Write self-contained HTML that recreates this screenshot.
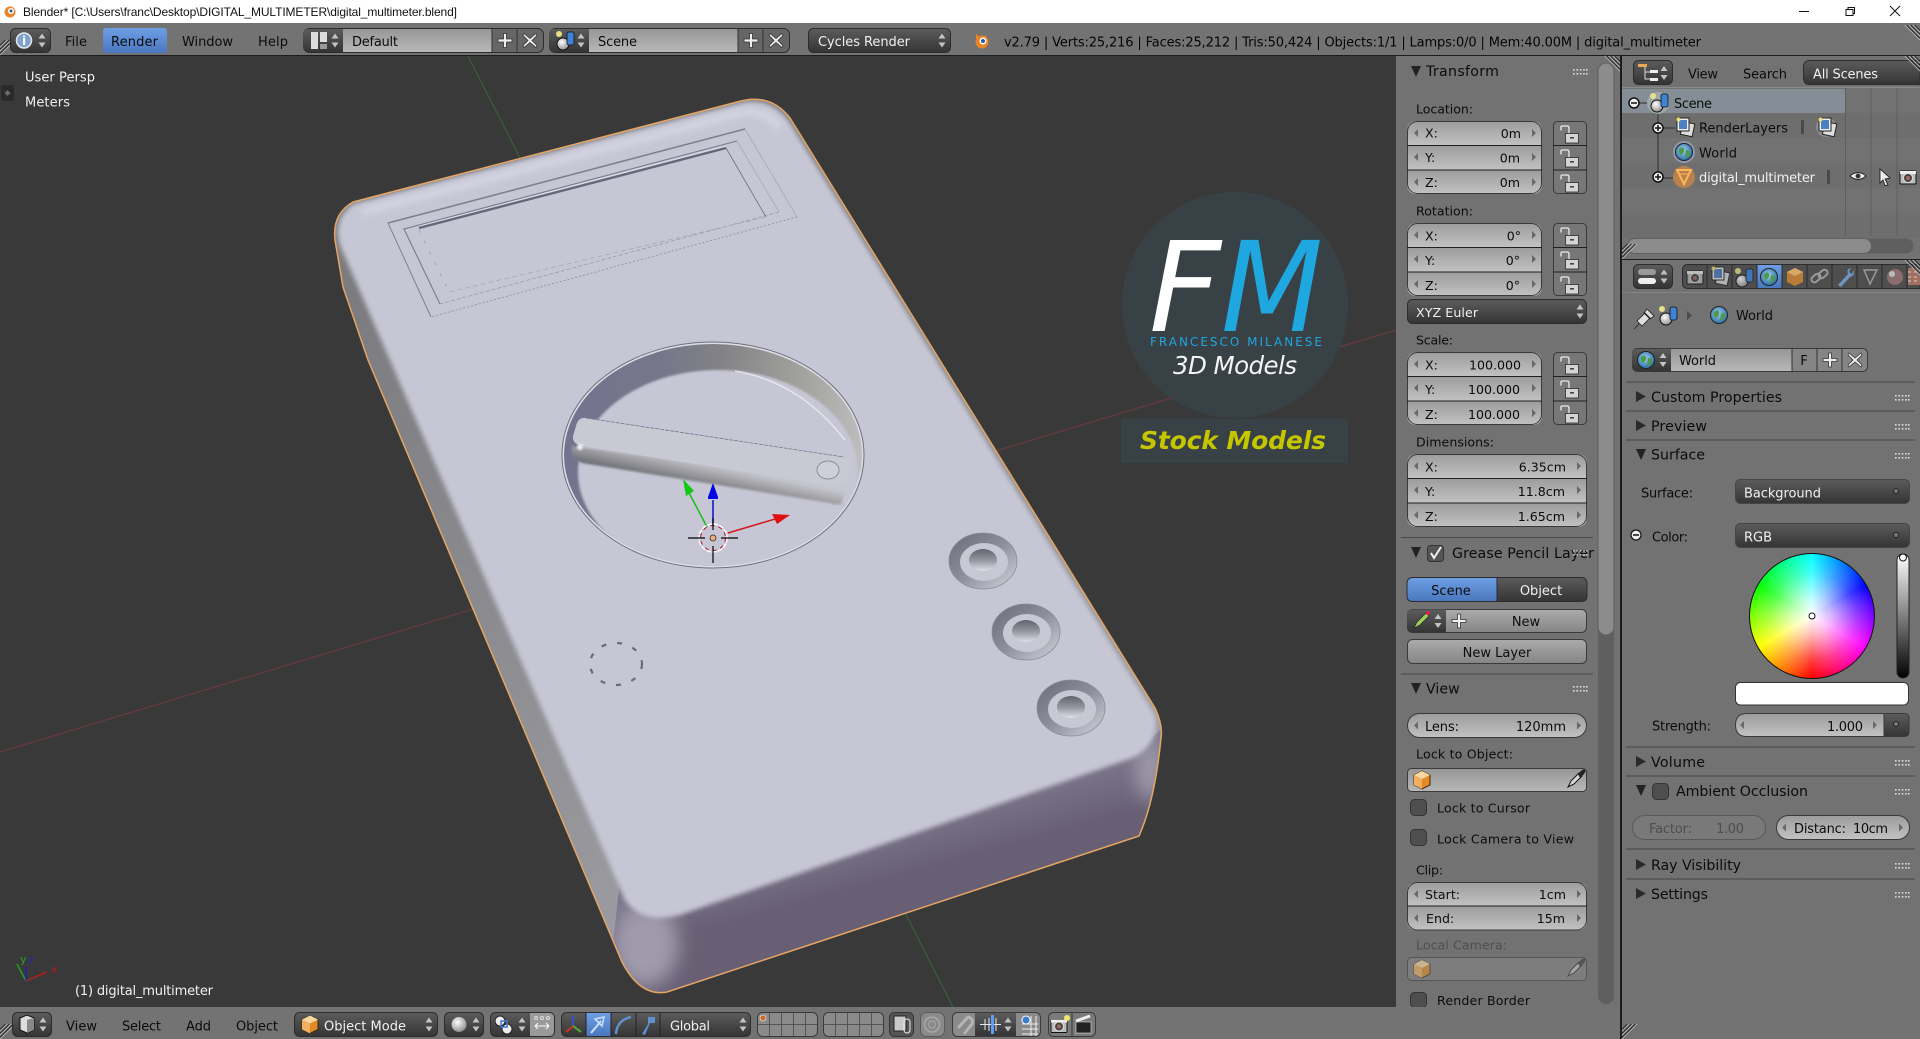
<!DOCTYPE html>
<html><head><meta charset="utf-8"><title>Blender</title>
<style>
html,body{margin:0;padding:0;background:#393939;overflow:hidden}
svg{display:block;position:absolute;left:0;top:0}
text{font-family:"DejaVu Sans",sans-serif;font-size:12.6px;fill:#0c0c0c}
.w{fill:#f0f0f0}.g{fill:#4e4e4e}.h{font-size:14.2px}.m{font-size:13px}
.e{text-anchor:end}.c{text-anchor:middle}
</style></head><body>
<svg width="1920" height="1039" viewBox="0 0 1920 1039" xmlns="http://www.w3.org/2000/svg">
<defs>
<linearGradient id="num" x1="0" y1="0" x2="0" y2="1"><stop offset="0" stop-color="#9c9c9c"/><stop offset="1" stop-color="#c2c2c2"/></linearGradient>
<linearGradient id="btn" x1="0" y1="0" x2="0" y2="1"><stop offset="0" stop-color="#ababab"/><stop offset="1" stop-color="#858585"/></linearGradient>
<linearGradient id="txt" x1="0" y1="0" x2="0" y2="1"><stop offset="0" stop-color="#969696"/><stop offset="1" stop-color="#b8b8b8"/></linearGradient>
<linearGradient id="drk" x1="0" y1="0" x2="0" y2="1"><stop offset="0" stop-color="#5c5c5c"/><stop offset="1" stop-color="#343434"/></linearGradient>
<linearGradient id="blu" x1="0" y1="0" x2="0" y2="1"><stop offset="0" stop-color="#6d9fe4"/><stop offset="1" stop-color="#4a77bd"/></linearGradient>
<linearGradient id="val" x1="0" y1="0" x2="0" y2="1"><stop offset="0" stop-color="#fff"/><stop offset="1" stop-color="#000"/></linearGradient>
<linearGradient id="side" gradientUnits="userSpaceOnUse" x1="880" y1="785" x2="905" y2="875"><stop offset="0" stop-color="#8a869c"/><stop offset="1" stop-color="#685f74"/></linearGradient>
<linearGradient id="lside" gradientUnits="userSpaceOnUse" x1="350" y1="300" x2="660" y2="960"><stop offset="0" stop-color="#7c7c80"/><stop offset="1" stop-color="#9c9ca2"/></linearGradient>
<linearGradient id="cres" gradientUnits="userSpaceOnUse" x1="565" y1="420" x2="865" y2="440"><stop offset="0" stop-color="#73738f"/><stop offset=".3" stop-color="#76768a"/><stop offset=".5" stop-color="#828286"/><stop offset=".78" stop-color="#a2a29e"/><stop offset="1" stop-color="#bebec0"/></linearGradient>
<linearGradient id="barside" gradientUnits="userSpaceOnUse" x1="703" y1="462" x2="697" y2="490"><stop offset="0" stop-color="#c6c6d0"/><stop offset=".35" stop-color="#a6a6aa"/><stop offset="1" stop-color="#62626c"/></linearGradient>
<linearGradient id="ringg" x1="0" y1="0" x2="1" y2="1"><stop offset="0" stop-color="#6a6a76"/><stop offset=".5" stop-color="#8f8f9c"/><stop offset="1" stop-color="#d4d4de"/></linearGradient>
<linearGradient id="holeg" x1="0" y1="0" x2="0" y2="1"><stop offset="0" stop-color="#62626c"/><stop offset=".55" stop-color="#9a9aa6"/><stop offset="1" stop-color="#e0e0e8"/></linearGradient>
<radialGradient id="sph" cx=".4" cy=".35" r=".7"><stop offset="0" stop-color="#fff"/><stop offset="1" stop-color="#8a8a8a"/></radialGradient>
<radialGradient id="glb" cx=".45" cy=".4" r=".6"><stop offset="0" stop-color="#9fd0f0"/><stop offset="1" stop-color="#2a6fa8"/></radialGradient>
<filter id="b3" x="-30%" y="-30%" width="160%" height="160%"><feGaussianBlur stdDeviation="3.5"/></filter>
<filter id="b8" x="-50%" y="-50%" width="200%" height="200%"><feGaussianBlur stdDeviation="9"/></filter>
<filter id="b2" x="-10%" y="-10%" width="120%" height="120%"><feGaussianBlur stdDeviation="2.4"/></filter>
<filter id="b1" x="-10%" y="-20%" width="120%" height="140%"><feGaussianBlur stdDeviation="1"/></filter>
<clipPath id="bodyclip"><path d="M353 202L737 102Q770 92 790 118L1155 708Q1163 725 1161 738Q1155 800 1139 836L667 992Q640 997 622 962L368 360L343 287L335 240Q332 214 353 202Z"/></clipPath>
<clipPath id="floor"><ellipse cx="713" cy="455" rx="149" ry="111"/></clipPath>

<g id="la"><path d="M0-4v8l-4-4z" fill="#686868"/></g>
<g id="ra"><path d="M0-4v8l4-4z" fill="#686868"/></g>
<g id="updn"><path d="M0-7l3.500 5h-7zM0 7l3.500-5h-7z" fill="#c4c4c4"/></g>

<g id="tri135"><path d="M0 24.500V10Q0 0 10 0H125Q135 0 135 10V24.500Z" fill="url(#num)"/><rect y="24.500" width="135" height="24.500" fill="url(#num)"/><path d="M0 49H135V63Q135 73 125 73H10Q0 73 0 63Z" fill="url(#num)"/><rect x=".5" y=".5" width="134" height="72" rx="10" fill="none" stroke="#3a3a3a"/><path d="M0 24.500H135M0 49H135" stroke="#1f1f1f"/>
<use href="#la" x="11" y="12"/><use href="#la" x="11" y="36"/><use href="#la" x="11" y="61"/><use href="#ra" x="125" y="12"/><use href="#ra" x="125" y="36"/><use href="#ra" x="125" y="61"/></g>
<g id="tri180"><path d="M0 24.500V10Q0 0 10 0H170Q180 0 180 10V24.500Z" fill="url(#num)"/><rect y="24.500" width="180" height="24.500" fill="url(#num)"/><path d="M0 49H180V63Q180 73 170 73H10Q0 73 0 63Z" fill="url(#num)"/><rect x=".5" y=".5" width="179" height="72" rx="10" fill="none" stroke="#3a3a3a"/><path d="M0 24.500H180M0 49H180" stroke="#1f1f1f"/>
<use href="#la" x="11" y="12"/><use href="#la" x="11" y="36"/><use href="#la" x="11" y="61"/><use href="#ra" x="170" y="12"/><use href="#ra" x="170" y="36"/><use href="#ra" x="170" y="61"/></g>

<g id="lk"><path d="M8 8.500V5Q8 4 9.500 4H14Q16 4 16 6V11.500" fill="none" stroke="#ececec" stroke-width="1.300"/><rect x="12.500" y="11.500" width="13" height="9.500" fill="#d4d4d4" stroke="#2a2a2a" stroke-width=".8"/><rect x="17" y="15" width="4" height="1.600" fill="#444"/></g>
<g id="locks"><rect x=".5" y=".5" width="33" height="72" rx="4" fill="#777" stroke="#3a3a3a"/><path d="M0 24.500H34M0 49H34" stroke="#1f1f1f"/><use href="#lk" x="0" y="1"/><use href="#lk" x="0" y="25"/><use href="#lk" x="0" y="50"/></g>

<g id="grip" fill="#dcdcdc"><rect x="0" y="0" width="1.600" height="1.600"/><rect x="3.400" y="0" width="1.600" height="1.600"/><rect x="6.800" y="0" width="1.600" height="1.600"/><rect x="10.200" y="0" width="1.600" height="1.600"/><rect x="13" y="0" width="1.600" height="1.600"/><rect x="0" y="4" width="1.600" height="1.600"/><rect x="3.400" y="4" width="1.600" height="1.600"/><rect x="6.800" y="4" width="1.600" height="1.600"/><rect x="10.200" y="4" width="1.600" height="1.600"/><rect x="13" y="4" width="1.600" height="1.600"/></g>
<path id="td" d="M0 0h10l-5 11z" fill="#222"/>
<path id="tr" d="M0 0l10 5.500-10 5.500z" fill="#2a2a2a"/>

<g id="hatch" stroke-width="1"><path d="M0 0L15 15M4 0L15 11M8 0L15 7" stroke="#b4b4b4"/><path d="M1.500 0L15 13.500M5.500 0L15 9.500M9.500 0L15 5.500" stroke="#252525"/></g>

<g id="scene"><circle cx="-3" cy="3" r="6" fill="url(#sph)" stroke="#111"/><rect x="1" y="-9" width="7" height="13" rx="2" fill="#3f83d6" stroke="#111" stroke-width=".8"/><circle cx="-7" cy="-7" r="3" fill="#e6e08c"/></g>
<g id="world"><circle r="8.500" fill="url(#glb)" stroke="#222"/><path d="M-5-3Q-1-6 0-3T-3 3Q-6 1-5-3ZM2-2L6-1 5 4 1 6Z" fill="#4f9a4a"/></g>
<g id="rl"><rect x="-3" y="-5" width="12" height="13" fill="#ddd" stroke="#222" transform="rotate(12)"/><rect x="-8" y="-9" width="12" height="13" fill="#eee" stroke="#222"/><rect x="-6" y="-7" width="8" height="9" fill="#4d7fc4"/><circle cx="-6.500" cy="-7.500" r="2" fill="#e8e070"/></g>
<g id="cube"><path d="M0-9L8-5V5L0 9-8 5V-5Z" fill="#e28a28" stroke="#3a2a10"/><path d="M0-9L8-5 0-1-8-5Z" fill="#f8d8a0"/><path d="M0-1V9L-8 5V-5Z" fill="#f0b060"/></g>
<g id="drop"><path d="M-8 8L-5 2 3-6 6-3-2 5Z" fill="#d8d8d8" stroke="#111"/><path d="M2-5L6-9Q8-10 9-9T8-5L4-1Z" fill="#222"/></g>

<g id="plus"><path d="M-7-1.500H-1.500V-7H1.500V-1.500H7V1.500H1.500V7H-1.500V1.500H-7Z" fill="#eee" stroke="#333" stroke-width=".8"/></g>
<g id="xx"><path d="M-6-7L0-2 6-7 7-5 2 0 7 5 6 7 0 2-6 7-7 5-2 0-7-5Z" fill="#eee" stroke="#333" stroke-width=".8"/></g>
<g id="cam"><rect x="-8" y="-6" width="16" height="13" rx="1" fill="#bcbcbc" stroke="#111"/><rect x="-8" y="-6" width="16" height="3" fill="#eee"/><circle cy="1" r="4.500" fill="#444" stroke="#ddd"/><circle cy="1" r="2" fill="#a66"/></g>
</defs>

<!-- base -->
<rect width="1920" height="1039" fill="#393939"/>
<!-- grid lines -->
<path d="M468 56L953 1007" stroke="#3d653d" stroke-width="1"/>
<path d="M0 752L1396 330" stroke="#6a3a3f" stroke-width="1.200"/>

<!-- device -->
<path d="M353 202L737 102Q770 92 790 118L1155 708Q1163 725 1161 738Q1155 800 1139 836L667 992Q640 997 622 962L368 360L343 287L335 240Q332 214 353 202Z" fill="url(#lside)"/>
<g clip-path="url(#bodyclip)">
<path d="M620 880L680 905 1140 750 1175 715 1175 850 660 1005 610 970Z" fill="url(#side)"/>
<ellipse cx="645" cy="945" rx="34" ry="42" fill="#9f9aac" filter="url(#b8)"/>
<ellipse cx="1150" cy="770" rx="14" ry="30" fill="#9d9aaa" filter="url(#b8)"/>
<path d="M353 204L737 104Q768 95 788 120L1155 715Q1160 742 1135 757L680 915Q642 925 625 900L342 250Q330 222 353 204Z" fill="#c6c6d4" filter="url(#b2)"/>
<path d="M362 212L737 114Q762 106 780 128" fill="none" stroke="#d5d5e4" stroke-width="7" filter="url(#b3)"/>
</g>
<path d="M353 202L737 102Q770 92 790 118L1155 708Q1163 725 1161 738Q1155 800 1139 836L667 992Q640 997 622 962L368 360L343 287L335 240Q332 214 353 202Z" fill="none" stroke="#e5a564" stroke-width="1.500"/>

<!-- lcd -->
<g fill="none">
<path d="M431 317L388 223L745 129" stroke="#80808f" stroke-width="1"/>
<path d="M388 223L745 129" stroke="#80808f" stroke-width="1.600"/>
<path d="M745 129L797 217" stroke="#a8a8b4" stroke-width=".8"/>
<path d="M797 217L431 317" stroke="#8d8d9a" stroke-width=".8" stroke-dasharray="2 2"/>
<path d="M440 304L404 229L737 141" stroke="#7a7a8a" stroke-width="1.100"/>
<path d="M737 141L779 212" stroke="#a8a8b4" stroke-width=".8"/>
<path d="M779 212L440 304" stroke="#9b9ba8" stroke-width=".8" stroke-dasharray="4 2"/>
<path d="M419 228L726 148" stroke="#66667c" stroke-width="2.400"/>
<path d="M419 226L726 146" stroke="#f0f0f6" stroke-width=".8" opacity=".7"/>
<path d="M726 148L766 217" stroke="#6e6e7c" stroke-width=".8"/>
<path d="M419 230L449 292" stroke="#9b9ba8" stroke-width=".8" stroke-dasharray="3 9"/>
<path d="M766 217L449 292" stroke="#a8a8b4" stroke-width=".8" stroke-dasharray="5 3"/>
</g>

<!-- dial -->
<ellipse cx="713" cy="455" rx="151" ry="113" fill="#dcdce4" stroke="#6f6f7d" stroke-width="1"/>
<g clip-path="url(#floor)">
<ellipse cx="713" cy="455" rx="149" ry="111" fill="url(#cres)"/>
<ellipse cx="718" cy="472" rx="140" ry="102" fill="#c6c6d4" filter="url(#b1)"/>
</g>
<path d="M735 371Q800 382 845 440" fill="none" stroke="#ececf0" stroke-width="1.500" opacity=".8"/>
<!-- bar -->
<path d="M572 446L846 484 842 503Q838 506 830 503L582 463Q570 458 572 446Z" fill="url(#barside)" filter="url(#b1)"/>
<path d="M586 418L844 457Q852 460 850 472L847 482Q843 488 834 486L582 446Q572 444 573 436L576 426Q578 417 586 418Z" fill="#c9c9d4"/>
<circle cx="580" cy="447" r="3" fill="#f4f4f4" filter="url(#b1)"/>
<ellipse cx="828" cy="470" rx="11" ry="9" fill="#cfcfd9" stroke="#8c8c98"/>
<path d="M586 418L844 457" stroke="#77778a" stroke-width=".8" stroke-dasharray="4 1"/>

<!-- buttons -->
<g>
<g id="pb"><ellipse cx="983" cy="561" rx="34" ry="28" fill="url(#ringg)"/><ellipse cx="983" cy="561" rx="34" ry="28" fill="none" stroke="#8c8c98" stroke-width=".8"/><ellipse cx="984" cy="562" rx="24" ry="19" fill="#c8c8d4"/><ellipse cx="983" cy="560" rx="14" ry="11" fill="url(#holeg)"/></g>
<use href="#pb" x="43" y="71"/><use href="#pb" x="88" y="147"/>
</g>
<!-- speaker -->
<ellipse cx="616" cy="664" rx="26" ry="21" fill="none" stroke="#6a6a78" stroke-width="2.200" stroke-dasharray="5 11"/>

<!-- gizmo -->
<path d="M707 527L686 487" stroke="#17c017" stroke-width="1.500"/><path d="M683 479L694 491 686 496Z" fill="#14c814"/>
<path d="M713 525V500" stroke="#0a0ad8" stroke-width="1.500"/><path d="M713 483L718 497V499H708V497Z" fill="#0505e0"/>
<path d="M728 533L775 519" stroke="#d01a1a" stroke-width="1.500"/><path d="M790 515L772 514 777 524Z" fill="#e01010"/>
<circle cx="713" cy="538" r="14" fill="none" stroke="#fff" stroke-width="1.500" stroke-dasharray="5 1"/>
<circle cx="713" cy="538" r="12.500" fill="none" stroke="#c01030" stroke-width="1" stroke-dasharray="4 4"/>
<path d="M688 538H705M721 538H738M713 518V530M713 546V563" stroke="#000" stroke-width="1.200"/>
<circle cx="713" cy="538" r="3" fill="#e8b078" stroke="#222" stroke-width=".7"/>

<!-- logo -->
<g>
<circle cx="1235" cy="305" r="113" fill="#384145"/>
<rect x="1121" y="419" width="227" height="44" fill="#384145"/>
<text x="1149" y="331" style="font-size:125px;font-style:italic;fill:#fff" textLength="72" lengthAdjust="spacingAndGlyphs">F</text>
<text x="1221" y="331" style="font-size:125px;font-style:italic;fill:#1fa8e0" textLength="102" lengthAdjust="spacingAndGlyphs">M</text>
<text x="1150" y="346" style="font-size:12px;fill:#21a5dc" textLength="172">FRANCESCO MILANESE</text>
<text x="1173" y="374" style="font-size:24.500px;font-style:italic;fill:#f4f4f4" textLength="124">3D Models</text>
<text x="1140" y="449" style="font-size:25px;font-style:italic;font-weight:bold;fill:#c6c600" textLength="186">Stock Models</text>
</g>

<!-- viewport overlay text -->
<text class="w m" x="25" y="81.500" textLength="70">User Persp</text>
<text class="w m" x="25" y="106.500" textLength="45">Meters</text>
<rect x="1" y="85" width="13" height="16" rx="3" fill="#2a2a2a"/><path d="M7.500 90l3 3-3 3-3-3z" fill="#6a6a6a"/>
<path d="M26 981L47 972" stroke="#b02020" stroke-width="1.500"/><path d="M26 981L17 964" stroke="#20a020" stroke-width="1.500"/><path d="M26 981V966" stroke="#2020b0" stroke-width="1.500"/>
<text x="51" y="973" style="fill:#b02020;font-size:11px">x</text><text x="20" y="963" style="fill:#30a030;font-size:11px">y</text><text x="28" y="963" style="fill:#2828b0;font-size:11px">z</text>
<text class="w m" x="75" y="995" textLength="138">(1) digital_multimeter</text>

<!-- title bar -->
<rect width="1920" height="23" fill="#fff"/>
<circle cx="10" cy="12" r="5.500" fill="#e8842a"/><circle cx="11" cy="11" r="3" fill="#fff"/><circle cx="11" cy="11" r="1.500" fill="#2a5a9a"/>
<text x="23" y="16" style="font-family:'Liberation Sans',sans-serif;font-size:12px;fill:#111" textLength="434">Blender* [C:\Users\franc\Desktop\DIGITAL_MULTIMETER\digital_multimeter.blend]</text>
<path d="M1799 11.500H1809" stroke="#111"/>
<path d="M1846 9.500H1853V15.500H1846ZM1848 9.500V7.500H1854.500V13.500H1853" fill="none" stroke="#111"/>
<path d="M1890 6L1900 16M1900 6L1890 16" stroke="#111"/>

<!-- top header -->
<rect y="23" width="1920" height="32" fill="#737373"/>
<rect y="55" width="1920" height="1" fill="#1c1c1c"/>
<use href="#hatch" transform="translate(0,55) rotate(-90) translate(0,0) scale(1)"/>
<rect x="10.500" y="28.500" width="40" height="24" rx="5" fill="url(#drk)" stroke="#2c2c2c"/>
<circle cx="24" cy="40.500" r="7.500" fill="#7da3cf" stroke="#e8e8e8" stroke-width="1.500"/><text class="c" x="24" y="45" style="fill:#fff;font-size:12px;font-weight:bold">i</text>
<use href="#updn" x="42" y="40.500"/>
<text class="m" x="65" y="46" textLength="22">File</text>
<rect x="103" y="28" width="64" height="25" rx="3" fill="url(#blu)"/>
<text class="m" x="111" y="46" textLength="47">Render</text>
<text class="m" x="182" y="46" textLength="51">Window</text>
<text class="m" x="258" y="46" textLength="30">Help</text>

<rect x="303.500" y="28.500" width="240" height="24" rx="6" fill="#666" stroke="#2c2c2c"/>
<path d="M343 29H492V52H343Z" fill="url(#txt)"/>
<path d="M303 35Q303 29 309 29H343V52H309Q303 52 303 46Z" fill="url(#drk)"/>
<rect x="311" y="32" width="7" height="17" fill="#ddd"/><rect x="320" y="32" width="7" height="10" fill="#ddd"/><rect x="320" y="44" width="7" height="5" fill="#999"/>
<use href="#updn" x="335" y="40.500"/>
<path d="M492 29V52M517 29V52" stroke="#333"/>
<text class="m" x="352" y="46" textLength="46">Default</text>
<use href="#plus" x="505" y="40.500"/><use href="#xx" x="530" y="40.500"/>

<rect x="549.500" y="28.500" width="240" height="24" rx="6" fill="#666" stroke="#2c2c2c"/>
<path d="M589 29H738V52H589Z" fill="url(#txt)"/>
<path d="M549 35Q549 29 555 29H589V52H555Q549 52 549 46Z" fill="url(#drk)"/>
<use href="#scene" x="566" y="41"/>
<use href="#updn" x="581" y="40.500"/>
<path d="M738 29V52M763 29V52" stroke="#333"/>
<text class="m" x="598" y="46" textLength="39">Scene</text>
<use href="#plus" x="751" y="40.500"/><use href="#xx" x="776" y="40.500"/>

<rect x="808.500" y="28.500" width="142" height="24" rx="5" fill="url(#drk)" stroke="#2c2c2c"/>
<text class="w m" x="818" y="46" textLength="92">Cycles Render</text>
<use href="#updn" x="942" y="40.500"/>

<circle cx="982" cy="42" r="6.500" fill="#e8842a"/><path d="M976 34L982 38 986 35 987 42H976Z" fill="#e8842a"/><circle cx="983" cy="41" r="3.500" fill="#fff"/><circle cx="983" cy="41" r="2" fill="#2a5a9a"/>
<text class="m" x="1004" y="46.500" textLength="697" style="fill:#050505">v2.79 | Verts:25,216 | Faces:25,212 | Tris:50,424 | Objects:1/1 | Lamps:0/0 | Mem:40.00M | digital_multimeter</text>
<use href="#hatch" x="1905" y="25"/>

<!-- N panel -->
<rect x="1396" y="56" width="224" height="951" fill="#727272"/>
<rect x="1598" y="63" width="16" height="941" rx="8" fill="#5f5f5f"/>
<rect x="1598" y="63" width="16" height="572" rx="8" fill="#8c8c8c" stroke="#606060"/>
<use href="#hatch" x="1605" y="56"/>
<use href="#td" x="1411" y="66"/>
<text class="h" x="1426" y="76" textLength="73">Transform</text>
<use href="#grip" x="1573" y="69"/>
<text x="1416" y="113.500" textLength="57">Location:</text>
<use href="#tri135" x="1407" y="121"/>
<text x="1425" y="137.500">X:</text><text x="1425" y="162">Y:</text><text x="1425" y="187">Z:</text>
<text class="e" x="1521" y="138">0m</text><text class="e" x="1520" y="162.500">0m</text><text class="e" x="1520" y="187">0m</text>
<use href="#locks" x="1553" y="121"/>

<text x="1416" y="215.500" textLength="57">Rotation:</text>
<use href="#tri135" x="1407" y="223"/>
<text x="1425" y="240.500">X:</text><text x="1425" y="265">Y:</text><text x="1425" y="290">Z:</text>
<text class="e" x="1521" y="240.500">0°</text><text class="e" x="1520" y="265">0°</text><text class="e" x="1520" y="290">0°</text>
<use href="#locks" x="1553" y="223"/>

<rect x="1407.500" y="299.500" width="179" height="24" rx="5" fill="url(#drk)" stroke="#2c2c2c"/>
<text class="w" x="1416" y="317" textLength="62">XYZ Euler</text>
<use href="#updn" x="1580" y="311.500"/>

<text x="1416" y="344.500" textLength="37">Scale:</text>
<use href="#tri135" x="1407" y="352"/>
<text x="1425" y="369.500">X:</text><text x="1425" y="394">Y:</text><text x="1425" y="419">Z:</text>
<text class="e" x="1521" y="369.500" textLength="52">100.000</text><text class="e" x="1520" y="394" textLength="52">100.000</text><text class="e" x="1520" y="419" textLength="52">100.000</text>
<use href="#locks" x="1553" y="352"/>

<text x="1416" y="446.500" textLength="78">Dimensions:</text>
<use href="#tri180" x="1407" y="454"/>
<text x="1425" y="471.500">X:</text><text x="1425" y="496">Y:</text><text x="1425" y="521">Z:</text>
<text class="e" x="1566" y="471.500">6.35cm</text><text class="e" x="1565" y="496">11.8cm</text><text class="e" x="1565" y="521">1.65cm</text>

<path d="M1401 537.500H1593" stroke="#4a4a4a"/>
<use href="#td" x="1411" y="547"/>
<rect x="1427.500" y="545.500" width="16" height="16" rx="3" fill="#555" stroke="#333"/>
<path d="M1431 553L1434 558 1441 547" fill="none" stroke="#f0f0f0" stroke-width="2"/>
<text class="h" x="1452" y="558" textLength="142">Grease Pencil Layer</text>
<use href="#grip" x="1573" y="550" opacity=".8"/>

<path d="M1407 584Q1407 577.500 1413 577.500H1497V601.500H1413Q1407 601.500 1407 596Z" fill="url(#blu)" stroke="#2c2c2c"/>
<path d="M1497 577.500H1581Q1587 577.500 1587 584V596Q1587 601.500 1581 601.500H1497Z" fill="url(#drk)" stroke="#2c2c2c"/>
<text class="m c" x="1451" y="595">Scene</text>
<text class="w m c" x="1541" y="595">Object</text>

<rect x="1407.500" y="609.500" width="179" height="23" rx="5" fill="url(#btn)" stroke="#3a3a3a"/>
<path d="M1407 615Q1407 609.500 1413 609.500H1446V632.500H1413Q1407 632.500 1407 627Z" fill="url(#drk)"/>
<path d="M1414 628L1417 622 1426 613 1429 616 1420 625Z" fill="#9ccc5a" stroke="#222" stroke-width=".6"/><circle cx="1428" cy="613" r="2" fill="#d24"/>
<use href="#updn" x="1438" y="621"/>
<use href="#plus" x="1459" y="621"/>
<text class="m c" x="1526" y="626">New</text>

<rect x="1407.500" y="639.500" width="179" height="24" rx="5" fill="url(#btn)" stroke="#3a3a3a"/>
<text class="m c" x="1497" y="657">New Layer</text>

<path d="M1401 674H1593" stroke="#4a4a4a"/>
<use href="#td" x="1411" y="683"/>
<text class="h" x="1426" y="693.500">View</text>
<use href="#grip" x="1573" y="686"/>

<rect x="1407.500" y="713.500" width="179" height="24" rx="12" fill="url(#num)" stroke="#3a3a3a"/>
<use href="#la" x="1418" y="725.500"/><use href="#ra" x="1577" y="725.500"/>
<text class="m" x="1425" y="731" textLength="34">Lens:</text>
<text class="e m" x="1566" y="731">120mm</text>

<text x="1416" y="758.500" textLength="97">Lock to Object:</text>
<rect x="1407.500" y="768.500" width="179" height="23" rx="4" fill="url(#txt)" stroke="#3a3a3a"/>
<use href="#cube" x="1422" y="780"/><use href="#drop" x="1576" y="779"/>

<rect x="1410.500" y="799.500" width="16" height="16" rx="4" fill="#4e4e4e" stroke="#343434"/>
<text x="1437" y="812.500" textLength="93">Lock to Cursor</text>
<rect x="1410.500" y="829.500" width="16" height="16" rx="4" fill="#4e4e4e" stroke="#343434"/>
<text x="1437" y="843.500" textLength="137">Lock Camera to View</text>

<text x="1416" y="874.500" textLength="27">Clip:</text>
<path d="M1407 906V892Q1407 882.500 1417 882.500H1577Q1587 882.500 1587 892V906Z" fill="url(#num)"/>
<path d="M1407 906H1587V920Q1587 930 1577 930H1417Q1407 930 1407 920Z" fill="url(#num)"/>
<rect x="1407.500" y="882.500" width="179" height="47.500" rx="10" fill="none" stroke="#3a3a3a"/>
<path d="M1407 906H1587" stroke="#1f1f1f"/>
<use href="#la" x="1418" y="894"/><use href="#ra" x="1577" y="894"/><use href="#la" x="1418" y="918"/><use href="#ra" x="1577" y="918"/>
<text x="1425" y="899">Start:</text><text x="1426" y="923">End:</text>
<text class="e" x="1566" y="899">1cm</text><text class="e" x="1565" y="923">15m</text>

<text class="g" x="1416" y="949.500" textLength="91">Local Camera:</text>
<rect x="1407.500" y="957.500" width="179" height="23" rx="4" fill="#7d7d7d" stroke="#555"/>
<use href="#cube" x="1422" y="969" opacity=".6"/><use href="#drop" x="1576" y="968" opacity=".45"/>
<rect x="1410.500" y="992.500" width="16" height="15" rx="4" fill="#4e4e4e" stroke="#343434"/>
<text x="1437" y="1005" textLength="93">Render Border</text>

<!-- bottom header -->
<rect y="1007" width="1620" height="32" fill="#737373"/>
<use href="#hatch" transform="translate(0,1039) rotate(-90)"/>
<rect x="12.500" y="1012.500" width="39" height="24" rx="5" fill="url(#drk)" stroke="#2c2c2c"/>
<path d="M20 1018L27 1015 34 1018V1030L27 1033 20 1030Z" fill="#ddd" stroke="#111"/><path d="M27 1020V1033L34 1030V1018Z" fill="#888"/>
<use href="#updn" x="43" y="1024.500"/>
<text class="m" x="66" y="1030.500" textLength="31">View</text>
<text class="m" x="122" y="1030.500" textLength="39">Select</text>
<text class="m" x="186" y="1030.500" textLength="25">Add</text>
<text class="m" x="236" y="1030.500" textLength="42">Object</text>
<rect x="294.500" y="1012.500" width="143" height="24" rx="5" fill="url(#drk)" stroke="#2c2c2c"/>
<use href="#cube" x="310" y="1024.500"/>
<text class="w m" x="324" y="1030.500" textLength="82">Object Mode</text>
<use href="#updn" x="429" y="1024.500"/>
<rect x="444.500" y="1012.500" width="39" height="24" rx="5" fill="url(#drk)" stroke="#2c2c2c"/>
<circle cx="459" cy="1024.500" r="7.500" fill="url(#sph)"/><use href="#updn" x="476" y="1024.500"/>
<rect x="490.500" y="1012.500" width="64" height="24" rx="5" fill="url(#drk)" stroke="#2c2c2c"/>
<path d="M530 1013H549Q554 1013 554 1018V1031Q554 1036 549 1036H530Z" fill="#9a9a9a"/>
<circle cx="500" cy="1021" r="5" fill="#eee" stroke="#222"/><circle cx="507" cy="1029" r="5" fill="#eee" stroke="#222"/><rect x="501" y="1021" width="6" height="6" fill="none" stroke="#3a7ad0" stroke-width="1.500"/>
<use href="#updn" x="522" y="1024.500"/>
<path d="M535 1026H549M535 1026l3-3M535 1026l3 3M549 1026l-3-3M549 1026l-3 3" stroke="#fff" fill="none"/>
<g fill="none" stroke="#ddd"><circle cx="536" cy="1018" r="1.500"/><circle cx="542" cy="1018" r="1.500"/><circle cx="548" cy="1018" r="1.500"/></g>
<rect x="561.500" y="1012.500" width="189" height="24" rx="5" fill="url(#drk)" stroke="#2c2c2c"/>
<rect x="586" y="1013" width="25" height="23" fill="url(#blu)"/>
<path d="M586 1013V1036M611 1013V1036M636 1013V1036M660 1013V1036" stroke="#222"/>
<path d="M573 1026V1016" stroke="#3050d0" stroke-width="2"/><path d="M573 1026L566 1032" stroke="#d03020" stroke-width="2"/><path d="M573 1026L581 1032" stroke="#50b030" stroke-width="2"/>
<path d="M591 1033L601 1021" stroke="#cfe0f8" stroke-width="2"/><path d="M604 1017L595 1019 602 1026Z" fill="none" stroke="#cfe0f8" stroke-width="1.500"/>
<path d="M616 1034Q617 1020 631 1017" fill="none" stroke="#5f8fcf" stroke-width="2.500"/>
<path d="M642 1034L648 1024V1017H655V1023H650L645 1035Z" fill="#5f8fcf"/>
<text class="w m" x="670" y="1030.500" textLength="40">Global</text>
<use href="#updn" x="743" y="1024.500"/>

<g id="lay"><rect x="757.500" y="1012.500" width="60" height="24" rx="5" fill="#8a8a8a" stroke="#3a3a3a"/><path d="M769.500 1013V1036M781.500 1013V1036M793.500 1013V1036M805.500 1013V1036M758 1024.500H817" stroke="#555"/></g>
<use href="#lay" x="66"/>
<circle cx="763" cy="1018" r="3" fill="#c96a2a" stroke="#eee" stroke-width=".6"/>
<rect x="889.500" y="1012.500" width="24" height="24" rx="5" fill="#555" stroke="#333"/>
<rect x="894" y="1016" width="12" height="15" fill="#c9c9c9" stroke="#222"/><path d="M904 1022a3 3 0 0 1 6 0v8a3 3 0 0 1-6 0z" fill="none" stroke="#eee"/>
<rect x="920.500" y="1012.500" width="24" height="24" rx="6" fill="#8a8a8a" stroke="#5a5a5a"/>
<circle cx="932" cy="1024.500" r="7.500" fill="none" stroke="#a8a8a8" stroke-width="1.500"/><circle cx="932" cy="1024.500" r="3.500" fill="none" stroke="#a8a8a8"/>
<rect x="952.500" y="1012.500" width="88" height="24" rx="5" fill="#8a8a8a" stroke="#3a3a3a"/>
<rect x="975" y="1013" width="41" height="23" fill="url(#drk)"/>
<path d="M958 1028L968 1017A5 5 0 0 1 972 1024L964 1034" fill="none" stroke="#b4b4b4" stroke-width="3"/>
<path d="M980 1024.500H1001M985 1019V1030M989 1018V1031M996 1018V1031" stroke="#dfe8f8"/><rect x="991" y="1015" width="3" height="19" fill="#5ea0f0"/>
<use href="#updn" x="1008" y="1024.500"/>
<path d="M1022 1029H1038M1031 1016V1036M1036 1016V1036M1022 1034H1038M1022 1024H1038" stroke="#eee"/><circle cx="1026" cy="1020" r="4" fill="#3a7ad0" stroke="#fff"/>
<rect x="1048.500" y="1012.500" width="47" height="24" rx="5" fill="#7a7a7a" stroke="#3a3a3a"/><path d="M1072 1013V1036" stroke="#333"/>
<use href="#cam" x="1059" y="1025.500"/><circle cx="1067" cy="1018" r="3" fill="#f2e66a"/>
<rect x="1076" y="1022" width="15" height="11" fill="#222" stroke="#ddd" stroke-width=".6"/><path d="M1076 1021L1090 1016" stroke="#eee" stroke-width="3"/>

<!-- vertical separator -->
<rect x="1620" y="56" width="2" height="983" fill="#1c1c1c"/>

<!-- Outliner -->
<rect x="1622" y="56" width="298" height="203" fill="#727272"/>
<rect x="1622" y="87" width="298" height="1" fill="#8a8a8a"/>
<rect x="1622" y="113" width="298" height="25" fill="#6e6e6e"/><rect x="1622" y="163" width="298" height="25" fill="#6e6e6e"/><rect x="1622" y="213" width="298" height="25" fill="#6e6e6e"/>
<rect x="1622" y="89" width="223" height="24" fill="#858e96"/>
<path d="M1845.500 88V236M1871 88V236M1897 88V236" stroke="#5e5e5e"/>
<rect x="1633.500" y="60.500" width="39" height="24" rx="5" fill="url(#drk)" stroke="#2c2c2c"/>
<path d="M1645 66V79H1655M1645 72H1655" stroke="#ddd" fill="none"/><rect x="1638" y="64" width="9" height="3" fill="#e8a858"/><rect x="1650" y="70" width="8" height="3" fill="#eee"/><rect x="1650" y="78" width="8" height="3" fill="#eee"/>
<use href="#updn" x="1664" y="73"/>
<text class="m" x="1688" y="78.500" textLength="30">View</text>
<text class="m" x="1743" y="78.500" textLength="44">Search</text>
<path d="M1920 60.500H1810Q1803.500 60.500 1803.500 67V78Q1803.500 84.500 1810 84.500H1920Z" fill="url(#drk)" stroke="#2c2c2c"/>
<text class="w m" x="1813" y="78.500" textLength="65">All Scenes</text>
<use href="#hatch" x="1905" y="56"/>

<path d="M1634 103H1650M1658 105V178M1658 178H1675M1658 128H1675" stroke="#2e2e2e"/>
<circle cx="1658" cy="103" r="11" fill="#9ea8a8"/>
<circle cx="1634" cy="103" r="5" fill="#eee" stroke="#111" stroke-width="1.500"/><path d="M1631 103H1637" stroke="#111" stroke-width="1.500"/>
<use href="#scene" x="1660" y="103"/>
<text class="m" x="1674" y="108" textLength="38">Scene</text>
<circle cx="1658" cy="128" r="5" fill="#eee" stroke="#111" stroke-width="1.500"/><path d="M1655 128H1661M1658 125V131" stroke="#111" stroke-width="1.500"/>
<use href="#rl" x="1685" y="127"/>
<text class="m" x="1699" y="132.500" textLength="89">RenderLayers</text>
<rect x="1801" y="120" width="3" height="14" fill="#4a4a4a"/>
<circle cx="1826" cy="127" r="10" fill="#8d8d8d"/><use href="#rl" x="1827" y="127"/>
<circle cx="1684" cy="152" r="11" fill="#8f99b0"/><use href="#world" x="1684" y="152"/>
<text class="m" x="1699" y="157.500" textLength="38">World</text>
<circle cx="1658" cy="177" r="5" fill="#eee" stroke="#111" stroke-width="1.500"/><path d="M1655 177H1661M1658 174V180" stroke="#111" stroke-width="1.500"/>
<circle cx="1684" cy="177" r="11" fill="#b8824e"/>
<path d="M1677 170H1691L1684 184Z" fill="none" stroke="#ffb35a" stroke-width="2"/><path d="M1680 174H1688" stroke="#ffb35a"/>
<text class="w m" x="1699" y="182" textLength="116">digital_multimeter</text>
<rect x="1827" y="170" width="3" height="14" fill="#4a4a4a"/>
<path d="M1850 176Q1858 169 1866 176Q1858 183 1850 176Z" fill="#eee" stroke="#222"/><circle cx="1858" cy="176" r="2.500" fill="#333"/>
<path d="M1880 169L1890 178 1885 179 1888 185 1885 185.500 1883 180 1880 183Z" fill="#eee" stroke="#111" stroke-width=".8"/>
<use href="#cam" x="1908" y="177"/>

<rect x="1627.500" y="238.500" width="286" height="15" rx="7.500" fill="#5f5f5f"/>
<rect x="1627.500" y="238.500" width="244" height="15" rx="7.500" fill="#8c8c8c" stroke="#606060"/>
<use href="#hatch" transform="translate(1622,259) rotate(-90) scale(1)" />

<rect x="1622" y="259" width="298" height="1" fill="#1c1c1c"/>

<!-- Properties -->
<rect x="1622" y="260" width="298" height="779" fill="#727272"/>
<rect x="1622" y="292" width="298" height="1" fill="#858585"/>
<rect x="1633.500" y="264.500" width="39" height="24" rx="5" fill="url(#drk)" stroke="#2c2c2c"/>
<rect x="1638" y="269" width="18" height="6" rx="3" fill="#999"/><rect x="1638" y="278" width="18" height="6" rx="3" fill="#eee"/>
<use href="#updn" x="1664" y="276.500"/>
<path d="M1920 264.500H1688Q1682.500 264.500 1682.500 270V283Q1682.500 288.500 1688 288.500H1920Z" fill="#4e4e4e" stroke="#2c2c2c"/>
<rect x="1757" y="265" width="25" height="23" fill="url(#blu)"/>
<path d="M1707 265V288M1732 265V288M1757 265V288M1782 265V288M1807 265V288M1832 265V288M1857 265V288M1882 265V288M1907 265V288" stroke="#2a2a2a"/>
<use href="#cam" x="1695" y="277" opacity=".7"/>
<use href="#rl" x="1720" y="276" opacity=".7"/>
<use href="#scene" x="1745" y="278" opacity=".75"/>
<use href="#world" x="1769" y="277"/>
<path d="M1795 268L1803 272V282L1795 286 1787 282V272Z" fill="#b87c38"/><path d="M1795 268L1803 272 1795 276 1787 272Z" fill="#d8a868"/>
<g fill="none" stroke="#9a9a9a" stroke-width="2"><rect x="1811" y="275" width="10" height="6" rx="3" transform="rotate(-40 1816 278)"/><rect x="1818" y="271" width="10" height="6" rx="3" transform="rotate(-40 1823 274)"/></g>
<path d="M1838 285L1848 274Q1846 269 1851 268L1849 272 1852 274 1854 270Q1855 276 1850 277L1841 287Z" fill="#6f94c0"/>
<path d="M1864 270H1877L1870 284Z" fill="none" stroke="#9a9a9a" stroke-width="1.500"/>
<circle cx="1895" cy="277" r="8" fill="#8a6e6e"/><circle cx="1892" cy="274" r="3" fill="#bbb"/>
<rect x="1908" y="268" width="12" height="17" fill="#a07060"/><path d="M1908 272H1920M1908 277H1920M1908 281H1920" stroke="#dcc" stroke-dasharray="3 3"/>
<use href="#hatch" x="1905" y="260"/>

<path d="M1637 321L1645 313 1650 318 1642 326ZM1647 309L1654 316 1650 319 1644 313ZM1639 324L1634 329" fill="#ddd" stroke="#222" stroke-width=".8"/>
<use href="#scene" x="1669" y="316"/>
<path d="M1687 311L1692 315.500 1687 320Z" fill="#4a4a4a"/>
<use href="#world" x="1719" y="315"/>
<text class="m" x="1736" y="320" textLength="37">World</text>

<rect x="1632.500" y="348.500" width="235" height="23" rx="5" fill="#858585" stroke="#3a3a3a"/>
<path d="M1671 349H1792V371H1671Z" fill="url(#txt)"/>
<path d="M1632 354Q1632 349 1638 349H1671V371H1638Q1632 371 1632 366Z" fill="url(#drk)"/>
<use href="#world" x="1646" y="360"/><use href="#updn" x="1663" y="360"/>
<path d="M1792 349V371M1817 349V371M1842 349V371" stroke="#333"/>
<text class="m" x="1679" y="365" textLength="37">World</text>
<text class="m c" x="1804" y="365">F</text>
<use href="#plus" x="1830" y="360"/><use href="#xx" x="1855" y="360"/>

<path d="M1626 382H1915M1626 411H1915M1626 440H1915M1626 747H1915M1626 776H1915M1626 849H1915M1626 879H1915" stroke="#474747"/>
<use href="#tr" x="1636" y="391"/><text class="h" x="1651" y="402" textLength="131">Custom Properties</text><use href="#grip" x="1895" y="395"/>
<use href="#tr" x="1636" y="420"/><text class="h" x="1651" y="431" textLength="56">Preview</text><use href="#grip" x="1895" y="424"/>
<use href="#td" x="1636" y="449"/><text class="h" x="1651" y="459.500" textLength="54">Surface</text><use href="#grip" x="1895" y="453"/>

<text class="m" x="1641" y="497.500" textLength="52">Surface:</text>
<rect x="1735.500" y="479.500" width="174" height="24" rx="5" fill="url(#drk)" stroke="#454545"/>
<text class="w m" x="1744" y="497.500" textLength="77">Background</text>
<circle cx="1896" cy="491" r="2.500" fill="#777" stroke="#222"/>
<circle cx="1636" cy="535" r="5" fill="#eee" stroke="#111" stroke-width="1.200"/><path d="M1633 535H1639" stroke="#111" stroke-width="1.500"/>
<text class="m" x="1652" y="541.500" textLength="36">Color:</text>
<rect x="1735.500" y="523.500" width="174" height="24" rx="5" fill="url(#drk)" stroke="#454545"/>
<text class="w m" x="1744" y="541.500" textLength="28">RGB</text>
<circle cx="1896" cy="535" r="2.500" fill="#777" stroke="#222"/>

<foreignObject x="1749" y="553" width="126" height="126"><div xmlns="http://www.w3.org/1999/xhtml" style="width:124px;height:124px;border-radius:50%;border:1px solid #111;background:radial-gradient(circle closest-side,#fff 0,rgba(255,255,255,.72) 30%,rgba(255,255,255,.25) 70%,rgba(255,255,255,0) 100%),conic-gradient(#00ffff,#0000ff 60deg,#ff00ff 120deg,#ff0000 180deg,#ffff00 240deg,#00ff00 300deg,#00ffff)"></div></foreignObject>
<circle cx="1812" cy="616" r="3" fill="#fff" stroke="#111"/>
<rect x="1897" y="554" width="12" height="124" rx="6" fill="url(#val)" stroke="#222"/>
<circle cx="1903" cy="557.500" r="3.500" fill="#fff" stroke="#111"/>
<rect x="1735.500" y="682.500" width="173" height="22.500" rx="5" fill="#fff" stroke="#333"/>

<text class="m" x="1652" y="730.500" textLength="59">Strength:</text>
<path d="M1884 713.500H1747Q1735.500 713.500 1735.500 725T1747 736.500H1884Z" fill="url(#num)" stroke="#3a3a3a"/>
<path d="M1884 713.500H1904Q1909 713.500 1909 718V732Q1909 736.500 1904 736.500H1884Z" fill="url(#drk)" stroke="#3a3a3a"/>
<use href="#la" x="1744" y="725"/><use href="#ra" x="1873" y="725"/>
<text class="e m" x="1863" y="731" textLength="36">1.000</text>
<circle cx="1896" cy="724" r="2.500" fill="#777" stroke="#222"/>

<use href="#tr" x="1636" y="756"/><text class="h" x="1651" y="767" textLength="54">Volume</text><use href="#grip" x="1895" y="760"/>
<use href="#td" x="1636" y="785"/>
<rect x="1652.500" y="783.500" width="16" height="16" rx="4" fill="#4e4e4e" stroke="#343434"/>
<text class="h" x="1676" y="796" textLength="132">Ambient Occlusion</text><use href="#grip" x="1895" y="789"/>

<rect x="1632.500" y="815.500" width="133" height="24" rx="12" fill="#797979" stroke="#5a5a5a"/>
<text class="g m" x="1649" y="833" textLength="43">Factor:</text><text class="g m" x="1716" y="833" textLength="28">1.00</text>
<rect x="1776.500" y="815.500" width="133" height="24" rx="12" fill="url(#num)" stroke="#3a3a3a"/>
<use href="#la" x="1786" y="827.500"/><use href="#ra" x="1899" y="827.500"/>
<text class="m" x="1794" y="833" textLength="52">Distanc:</text><text class="m" x="1853" y="833" textLength="35">10cm</text>

<use href="#tr" x="1636" y="859"/><text class="h" x="1651" y="870" textLength="90">Ray Visibility</text><use href="#grip" x="1895" y="863"/>
<use href="#tr" x="1636" y="888"/><text class="h" x="1651" y="899" textLength="57">Settings</text><use href="#grip" x="1895" y="892"/>
<use href="#hatch" transform="translate(1622,1039) rotate(-90)"/>
</svg>
</body></html>
